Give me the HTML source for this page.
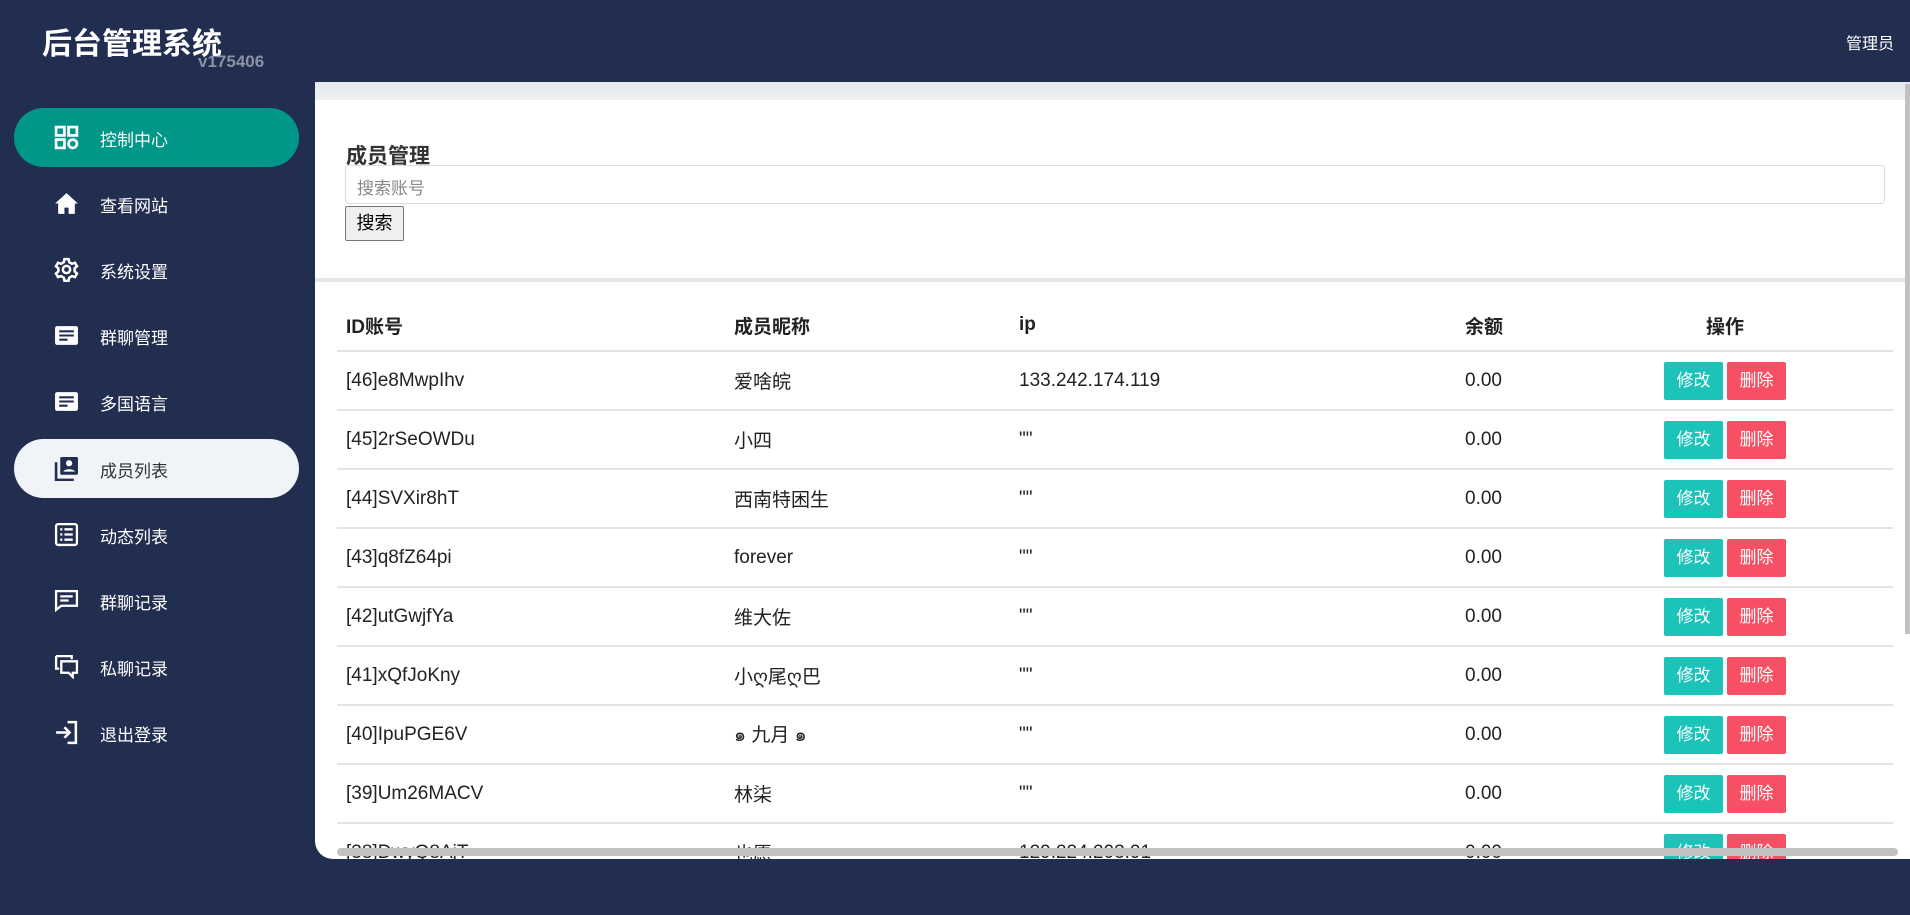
<!DOCTYPE html>
<html><head><meta charset="utf-8"><style>
*{box-sizing:border-box;margin:0;padding:0}
body{width:1910px;height:915px;overflow:hidden;background:#222e50;font-family:"Liberation Sans","Noto Sans CJK SC",sans-serif;position:relative}
.title{position:absolute;left:42px;top:19px;color:#fff;font-size:30px;font-weight:bold}
.ver{position:absolute;left:198px;top:52px;color:#8a92a6;font-size:17px;font-weight:bold}
.admin{position:absolute;right:16px;top:30px;color:#fff;font-size:16px}
.nav{position:absolute;left:14px;width:285px;height:59px;border-radius:30px;color:#fff;font-size:17px}
.nav svg{position:absolute;left:40px;top:17px;width:25px;height:25px}
.nav span{position:absolute;left:86px;top:18px}
.act{background:#009688}
.light{background:#f0f3f7;color:#333}
.main{position:absolute;left:315px;top:82px;width:1595px;height:777px;background:#fff;border-bottom-left-radius:18px;overflow:hidden}
.band{position:absolute;left:0;top:0;width:100%;height:18px;background:linear-gradient(#e5e8ec,#eef1f4)}
.div{position:absolute;left:0;top:196px;width:100%;height:4px;background:#e4e6ea}
h2{position:absolute;left:31px;top:58px;font-size:21px;color:#333;font-weight:bold}
.inp{position:absolute;left:30px;top:83px;width:1540px;height:39px;border:1px solid #ddd;border-radius:3px;font-size:17px;color:#888;padding:8px 11px}
.btn{position:absolute;left:30px;top:124px;width:59px;height:35px;border:1px solid #777;border-radius:2px;background:#efefef;font-size:18px;text-align:center;line-height:33px;color:#000}
table{position:absolute;left:22px;top:218px;width:1556px;border-collapse:collapse;font-size:19px;color:#222;table-layout:fixed}
th{font-weight:bold;text-align:left;height:51px;padding-left:9px;border-bottom:2px solid #e0e2e6}
td{height:59px;padding-left:9px;border-bottom:2px solid #e2e4e8}
.op{text-align:center;padding-left:0}
.b{display:inline-block;width:59px;height:38px;line-height:38px;color:#fff;font-size:17px;border-radius:2px;text-align:center;margin:0 2px}
.e{background:#1cc3b9}.d{background:#f74f63}
.hs{position:absolute;left:22px;top:766px;width:1561px;height:8px;background:#c1c1c1;border-radius:4px}
.vs{position:absolute;left:1905px;top:84px;width:5px;height:550px;background:#c1c1c1}
</style></head><body>
<div class="title">后台管理系统</div><div class="ver">v175406</div>
<div class="admin">管理员</div>

<div class="nav act" style="top:108px"><svg viewBox="0 0 24 24" fill="none" stroke="#fff" stroke-width="2.6"><rect x="2" y="2" width="8" height="8"/><rect x="14" y="2" width="8" height="8"/><rect x="2" y="14" width="8" height="8"/><circle cx="18" cy="18" r="4"/></svg><span>控制中心</span></div>
<div class="nav" style="top:174px"><svg viewBox="0 0 24 24" fill="#fff"><path d="M12 2L1 12h3v10h6v-6h4v6h6V12h3z"/></svg><span>查看网站</span></div>
<div class="nav" style="top:240px"><svg viewBox="0 0 24 24" fill="none" stroke="#fff" stroke-width="2.4"><path d="M10 2h4l.6 3 2.6 1.5 2.9-1 2 3.4-2.3 2v3l2.3 2-2 3.4-2.9-1-2.6 1.5-.6 3h-4l-.6-3-2.6-1.5-2.9 1-2-3.4 2.3-2v-3l-2.3-2 2-3.4 2.9 1L9.4 5z"/><circle cx="12" cy="12" r="3.5"/></svg><span>系统设置</span></div>
<div class="nav" style="top:306px"><svg viewBox="0 0 24 24"><rect x="1" y="3" width="22" height="18" rx="2" fill="#fff"/><path d="M5 8h14M5 12h14M5 16h8" stroke="#222e50" stroke-width="2"/></svg><span>群聊管理</span></div>
<div class="nav" style="top:372px"><svg viewBox="0 0 24 24"><rect x="1" y="3" width="22" height="18" rx="2" fill="#fff"/><path d="M5 8h14M5 12h14M5 16h8" stroke="#222e50" stroke-width="2"/></svg><span>多国语言</span></div>
<div class="nav light" style="top:439px"><svg viewBox="0 0 24 24"><path d="M2 6v17h17" stroke="#222e50" stroke-width="2.5" fill="none"/><rect x="6" y="1" width="17" height="17" rx="1.5" fill="#222e50"/><circle cx="14.5" cy="7" r="3" fill="#fff"/><path d="M9 15c1-3 10-3 11 0z" fill="#fff"/></svg><span>成员列表</span></div>
<div class="nav" style="top:505px"><svg viewBox="0 0 24 24" fill="none" stroke="#fff" stroke-width="2.2"><rect x="2" y="2" width="20" height="20" rx="2"/><path d="M6 7h2M10 7h8M6 12h2M10 12h8M6 17h2M10 17h8"/></svg><span>动态列表</span></div>
<div class="nav" style="top:571px"><svg viewBox="0 0 24 24" fill="none" stroke="#fff" stroke-width="2.2"><path d="M2 3h20v14H7l-5 4z"/><path d="M6 8h12M6 12h8"/></svg><span>群聊记录</span></div>
<div class="nav" style="top:637px"><svg viewBox="0 0 24 24" fill="none" stroke="#fff" stroke-width="2.2"><path d="M7 7h15v11h-4v4l-4-4H7z"/><path d="M2 2h15v3M2 2v12h3"/></svg><span>私聊记录</span></div>
<div class="nav" style="top:703px"><svg viewBox="0 0 24 24" fill="none" stroke="#fff" stroke-width="2.4"><path d="M13 2h8v20h-8M2 12h13M10 7l5 5-5 5"/></svg><span>退出登录</span></div>

<div class="main">
<div class="band"></div>
<h2>成员管理</h2>
<div class="inp">搜索账号</div>
<div class="btn">搜索</div>
<div class="div"></div>
<table>
<colgroup><col style="width:388px"><col style="width:285px"><col style="width:446px"><col style="width:101px"><col style="width:336px"></colgroup>
<tr><th>ID账号</th><th>成员昵称</th><th>ip</th><th>余额</th><th class="op">操作</th></tr>
<tr><td>[46]e8MwpIhv</td><td>爱啥皖</td><td>133.242.174.119</td><td>0.00</td><td class="op"><span class="b e">修改</span><span class="b d">删除</span></td></tr>
<tr><td>[45]2rSeOWDu</td><td>小四</td><td>""</td><td>0.00</td><td class="op"><span class="b e">修改</span><span class="b d">删除</span></td></tr>
<tr><td>[44]SVXir8hT</td><td>西南特困生</td><td>""</td><td>0.00</td><td class="op"><span class="b e">修改</span><span class="b d">删除</span></td></tr>
<tr><td>[43]q8fZ64pi</td><td>forever</td><td>""</td><td>0.00</td><td class="op"><span class="b e">修改</span><span class="b d">删除</span></td></tr>
<tr><td>[42]utGwjfYa</td><td>维大佐</td><td>""</td><td>0.00</td><td class="op"><span class="b e">修改</span><span class="b d">删除</span></td></tr>
<tr><td>[41]xQfJoKny</td><td>小ღ尾ღ巴</td><td>""</td><td>0.00</td><td class="op"><span class="b e">修改</span><span class="b d">删除</span></td></tr>
<tr><td>[40]IpuPGE6V</td><td>๑ 九月 ๑</td><td>""</td><td>0.00</td><td class="op"><span class="b e">修改</span><span class="b d">删除</span></td></tr>
<tr><td>[39]Um26MACV</td><td>林柒</td><td>""</td><td>0.00</td><td class="op"><span class="b e">修改</span><span class="b d">删除</span></td></tr>
<tr><td>[38]DwyQ8AjT</td><td>也愿</td><td>129.224.203.91</td><td>0.00</td><td class="op"><span class="b e">修改</span><span class="b d">删除</span></td></tr>
</table>
<div class="hs"></div>
</div>
<div class="vs"></div>
</body></html>
